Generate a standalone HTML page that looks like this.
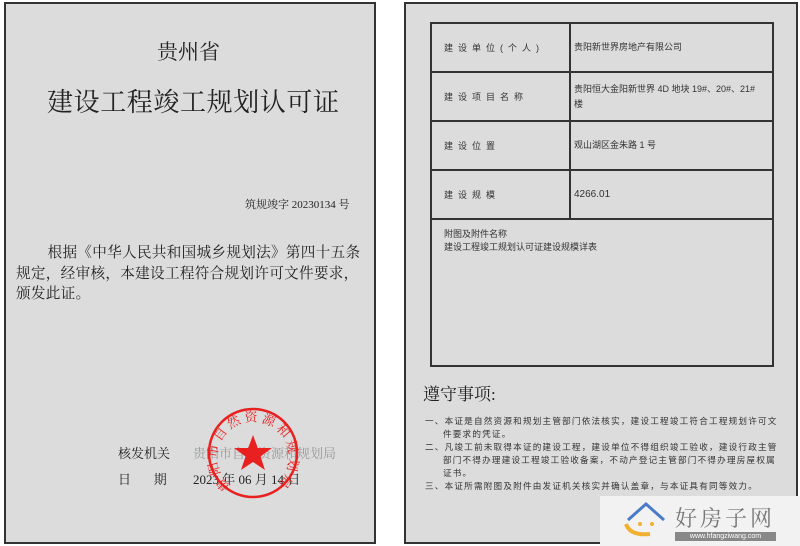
<!DOCTYPE html>
<html><head><meta charset="utf-8"><style>
body{margin:0;width:800px;height:546px;background:#fff;position:relative;overflow:hidden;font-family:"Liberation Serif","Noto Serif CJK SC",serif;color:#222}
.p{position:absolute;background:#dcdcdc;border:2px solid #333;box-sizing:border-box}
.a{position:absolute;white-space:nowrap}
.s{font-family:"Liberation Sans","Noto Sans CJK SC",sans-serif}
table{position:absolute;left:430px;top:22px;width:344px;border-collapse:collapse}
td{border:2px solid #333;font-size:9px;font-family:"Liberation Sans","Noto Sans CJK SC",sans-serif;vertical-align:middle;padding:0 0 0 12px;height:47px;color:#333}
td.l{width:125px;letter-spacing:5px}
td.r{padding-left:3px;line-height:15px}
</style></head><body>
<div class="p" style="left:4px;top:2px;width:372px;height:542px"></div>
<div class="p" style="left:404px;top:2px;width:394px;height:542px"></div>

<div class="a" style="left:157px;top:36px;font-size:21px">贵州省</div>
<div class="a" style="left:47px;top:82px;font-size:26px;letter-spacing:0.6px">建设工程竣工规划认可证</div>
<div class="a" style="left:245px;top:196px;font-size:11px">筑规竣字 20230134 号</div>
<div class="a" style="left:16px;top:243px;font-size:14.6px;line-height:20.5px;letter-spacing:0.3px">&nbsp;&nbsp;&nbsp;&nbsp;&nbsp;&nbsp;&nbsp;&nbsp;根据《中华人民共和国城乡规划法》第四十五条<br>规定，经审核，本建设工程符合规划许可文件要求，<br>颁发此证。</div>
<div class="a" style="left:118px;top:443px;font-size:13px">核发机关</div>
<div class="a" style="left:193px;top:443px;font-size:13px;color:#999">贵阳市自然资源和规划局</div>
<div class="a" style="left:118px;top:469px;font-size:13px">日&nbsp;&nbsp;&nbsp;&nbsp;&nbsp;&nbsp;&nbsp;期</div>
<div class="a" style="left:193px;top:469px;font-size:13px">2023 年 06 月 14 日</div>
<svg class="a" style="left:206px;top:406px" width="94" height="94" viewBox="0 0 94 94">
<circle cx="47" cy="47" r="44" fill="none" stroke="#e82020" stroke-width="2.5"/>
<polygon points="47,29 51.8,42 66,42 54.5,50.5 59,64 47,56 35,64 39.5,50.5 28,42 42.2,42" fill="#e82020"/>
<path id="arc" d="M25,80 A36,36 0 1,1 69,80" fill="none"/>
<text font-size="13" fill="#e82020" font-family="Noto Serif CJK SC,serif"><textPath href="#arc" textLength="175" lengthAdjust="spacing">贵阳市自然资源和规划局</textPath></text>
</svg>

<table>
<tr><td class="l">建设单位(个人)</td><td class="r">贵阳新世界房地产有限公司</td></tr>
<tr><td class="l">建设项目名称</td><td class="r">贵阳恒大金阳新世界 4D 地块 19#、20#、21#<br>楼</td></tr>
<tr><td class="l">建设位置</td><td class="r">观山湖区金朱路 1 号</td></tr>
<tr><td class="l">建设规模</td><td class="r" style="font-size:10px">4266.01</td></tr>
<tr><td colspan="2" style="height:137px;vertical-align:top;padding-top:8px;line-height:13px;letter-spacing:0">附图及附件名称<br>建设工程竣工规划认可证建设规模详表</td></tr>
</table>

<div class="a" style="left:423px;top:380px;font-size:17px">遵守事项:</div>
<div class="a s" style="left:425px;top:415px;font-size:8.6px;line-height:13px;color:#333;letter-spacing:1.2px">一、本证是自然资源和规划主管部门依法核实，建设工程竣工符合工程规划许可文<br>&nbsp;&nbsp;&nbsp;&nbsp;&nbsp;件要求的凭证。<br>二、凡竣工前未取得本证的建设工程，建设单位不得组织竣工验收，建设行政主管<br>&nbsp;&nbsp;&nbsp;&nbsp;&nbsp;部门不得办理建设工程竣工验收备案，不动产登记主管部门不得办理房屋权属<br>&nbsp;&nbsp;&nbsp;&nbsp;&nbsp;证书。<br>三、本证所需附图及附件由发证机关核实并确认盖章，与本证具有同等效力。</div>

<div class="a" style="left:600px;top:496px;width:200px;height:50px;background:#f2f2f2"></div>
<svg class="a" style="left:620px;top:498px" width="50" height="40"><path d="M8,22 L26,6 L44,22" stroke="#4a7bc8" stroke-width="3" fill="none"/><path d="M6,26 Q10,38 30,36" stroke="#f0b030" stroke-width="4" fill="none"/><circle cx="20" cy="26" r="2" fill="#f0b030"/><circle cx="32" cy="26" r="2" fill="#f0b030"/></svg>
<div class="a" style="left:675px;top:502px;font-size:22px;color:#777;letter-spacing:3px">好房子网</div>
<div class="a s" style="left:675px;top:532px;width:101px;height:9px;background:#888;color:#fff;font-size:7px;line-height:9px;text-align:center">www.hfangziwang.com</div>
</body></html>
